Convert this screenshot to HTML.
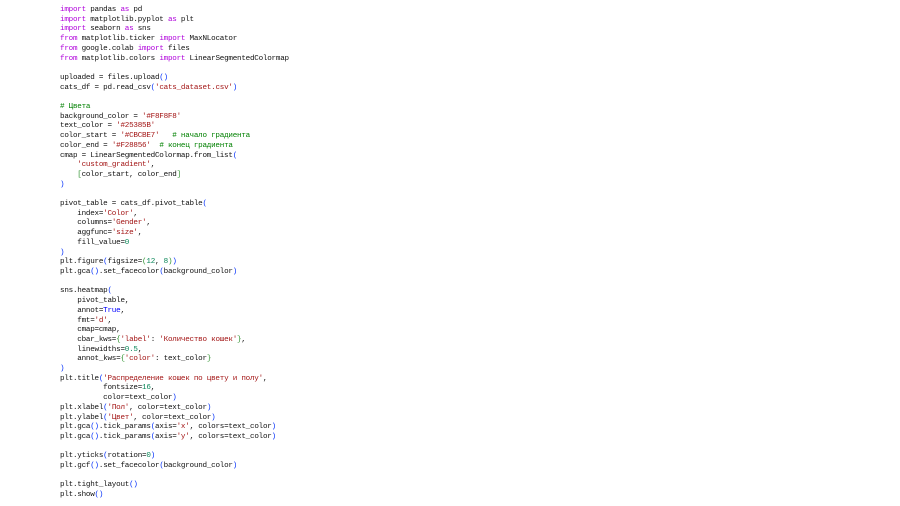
<!DOCTYPE html>
<html><head><meta charset="utf-8"><style>
html,body{margin:0;padding:0;background:#fff;width:900px;height:506px;overflow:hidden}
pre{margin:0;position:absolute;left:60px;top:6px;font-family:"Liberation Mono","DejaVu Sans Mono",monospace;font-size:7.6px;letter-spacing:-0.24px;line-height:9.7px;color:#111}
.k{color:#af00db}.s{color:#a31515}.n{color:#098658}.b{color:#0431fa}.g{color:#319331}.c{color:#008000}.t{color:#0000ff}
</style></head><body><pre><span class="k">import</span> pandas <span class="k">as</span> pd
<span class="k">import</span> matplotlib.pyplot <span class="k">as</span> plt
<span class="k">import</span> seaborn <span class="k">as</span> sns
<span class="k">from</span> matplotlib.ticker <span class="k">import</span> MaxNLocator
<span class="k">from</span> google.colab <span class="k">import</span> files
<span class="k">from</span> matplotlib.colors <span class="k">import</span> LinearSegmentedColormap

uploaded = files.upload<span class="b">()</span>
cats_df = pd.read_csv<span class="b">(</span><span class="s">'cats_dataset.csv'</span><span class="b">)</span>

<span class="c"># Цвета</span>
background_color = <span class="s">'#F8F8F8'</span>
text_color = <span class="s">'#25385B'</span>
color_start = <span class="s">'#CBCBE7'</span>   <span class="c"># начало градиента</span>
color_end = <span class="s">'#F28856'</span>  <span class="c"># конец градиента</span>
cmap = LinearSegmentedColormap.from_list<span class="b">(</span>
    <span class="s">'custom_gradient'</span>,
    <span class="g">[</span>color_start, color_end<span class="g">]</span>
<span class="b">)</span>

pivot_table = cats_df.pivot_table<span class="b">(</span>
    index=<span class="s">'Color'</span>,
    columns=<span class="s">'Gender'</span>,
    aggfunc=<span class="s">'size'</span>,
    fill_value=<span class="n">0</span>
<span class="b">)</span>
plt.figure<span class="b">(</span>figsize=<span class="g">(</span><span class="n">12</span>, <span class="n">8</span><span class="g">)</span><span class="b">)</span>
plt.gca<span class="b">()</span>.set_facecolor<span class="b">(</span>background_color<span class="b">)</span>

sns.heatmap<span class="b">(</span>
    pivot_table,
    annot=<span class="t">True</span>,
    fmt=<span class="s">'d'</span>,
    cmap=cmap,
    cbar_kws=<span class="g">{</span><span class="s">'label'</span>: <span class="s">'Количество кошек'</span><span class="g">}</span>,
    linewidths=<span class="n">0.5</span>,
    annot_kws=<span class="g">{</span><span class="s">'color'</span>: text_color<span class="g">}</span>
<span class="b">)</span>
plt.title<span class="b">(</span><span class="s">'Распределение кошек по цвету и полу'</span>,
          fontsize=<span class="n">16</span>,
          color=text_color<span class="b">)</span>
plt.xlabel<span class="b">(</span><span class="s">'Пол'</span>, color=text_color<span class="b">)</span>
plt.ylabel<span class="b">(</span><span class="s">'Цвет'</span>, color=text_color<span class="b">)</span>
plt.gca<span class="b">()</span>.tick_params<span class="b">(</span>axis=<span class="s">'x'</span>, colors=text_color<span class="b">)</span>
plt.gca<span class="b">()</span>.tick_params<span class="b">(</span>axis=<span class="s">'y'</span>, colors=text_color<span class="b">)</span>

plt.yticks<span class="b">(</span>rotation=<span class="n">0</span><span class="b">)</span>
plt.gcf<span class="b">()</span>.set_facecolor<span class="b">(</span>background_color<span class="b">)</span>

plt.tight_layout<span class="b">()</span>
plt.show<span class="b">()</span></pre></body></html>
